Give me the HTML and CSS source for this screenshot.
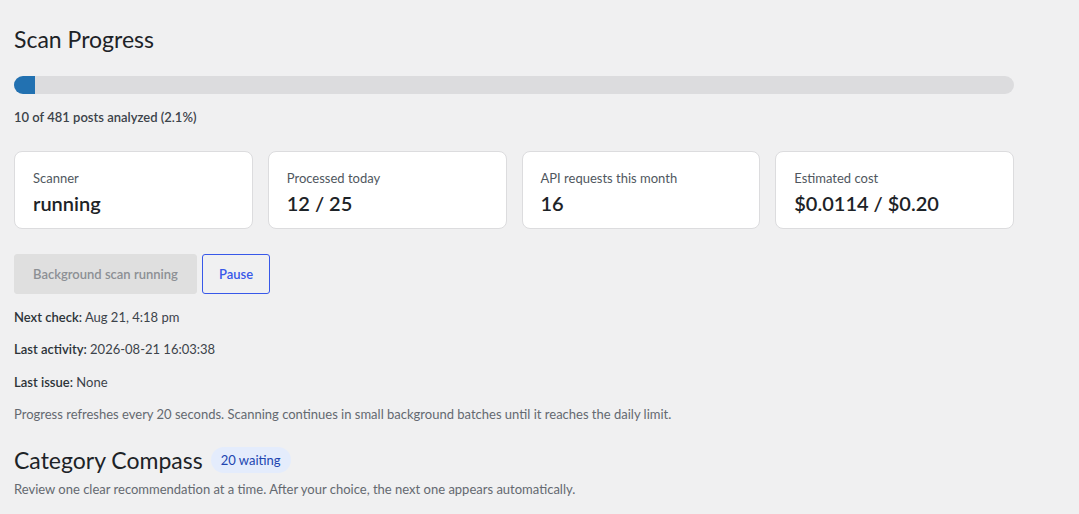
FILE: index.html
```html
<!DOCTYPE html>
<html lang="en">
<head>
  <meta charset="UTF-8">
  <title>Scan Progress</title>
  <link rel="stylesheet" href="styles.css">
</head>
<body>

  <div class="wrap">
    <h1>Scan Progress</h1>

    <div class="progress">
      <div class="progress-fill" style="width: 2.1%;"></div>
    </div>
    <p class="progress-summary">10 of 481 posts analyzed (2.1%)</p>

    <div class="stats">
      <div class="stat-card">
        <span class="stat-label">Scanner</span>
        <span class="stat-value">running</span>
      </div>
      <div class="stat-card">
        <span class="stat-label">Processed today</span>
        <span class="stat-value">12 / 25</span>
      </div>
      <div class="stat-card">
        <span class="stat-label">API requests this month</span>
        <span class="stat-value">16</span>
      </div>
      <div class="stat-card">
        <span class="stat-label">Estimated cost</span>
        <span class="stat-value">$0.0114 / $0.20</span>
      </div>
    </div>

    <div class="actions">
      <button class="btn btn-busy" disabled>Background scan running</button>
      <button class="btn btn-outline" id="pauseBtn">Pause</button>
    </div>

    <p><strong>Next check:</strong> Aug 21, 4:18 pm</p>
    <p><strong>Last activity:</strong> 2026-08-21 16:03:38</p>
    <p><strong>Last issue:</strong> None</p>
    <p class="description">Progress refreshes every 20 seconds. Scanning continues in small background batches until it reaches the daily limit.</p>

    <h2>Category Compass <span class="badge">20 waiting</span></h2>
    <p class="description intro">Review one clear recommendation at a time. After your choice, the next one appears automatically.</p>
  </div>

</body>
</html>
```

FILE: styles.css
```css
body {
  margin: 0;
  background: #f0f0f1;
  color: #3c434a;
  font-family: Lato, "Open Sans", sans-serif;
  font-size: 13px;
  line-height: 1.5;
}
.wrap {
  max-width: 1000px;
  padding: 24px 14px 0;
}
h1 {
  margin: 0;
  font-size: 23px;
  font-weight: 400;
  line-height: 30px;
  color: #1d2327;
}
.progress {
  margin-top: 22px;
  height: 18px;
  background: #dcdcde;
  border-radius: 9px;
  overflow: hidden;
}
.progress-fill {
  height: 100%;
  background: #2271b1;
}
p {
  margin: 13px 0;
}
.progress-summary {
  margin: 14px 0 23px;
  font-weight: 600;
}
.stats {
  display: grid;
  grid-template-columns: repeat(4, 1fr);
  gap: 15px;
}
.stat-card {
  display: flex;
  flex-direction: column;
  background: #fff;
  border: 1px solid #dcdcde;
  border-radius: 8px;
  padding: 16px 18px 11px;
}
.stat-label {
  line-height: 20px;
  color: #50575e;
}
.stat-value {
  margin-top: 1px;
  font-size: 20px;
  font-weight: 600;
  line-height: 28px;
  color: #1d2327;
}
.actions {
  display: flex;
  gap: 5px;
  margin: 25px 0 14px;
}
.btn {
  height: 40px;
  padding: 0 16px;
  font-family: inherit;
  font-size: 13px;
  font-weight: 600;
  border-radius: 3px;
}
.btn-busy {
  padding: 0 18px;
  background: #dfdfdf;
  color: #8c8f94;
  border: 1px solid #dfdfdf;
}
.btn-outline {
  background: transparent;
  color: #3858e9;
  border: 1px solid #3858e9;
  cursor: pointer;
}
strong {
  font-weight: 600;
  color: #2c3338;
}
.description {
  color: #646970;
}
h2 {
  display: flex;
  align-items: center;
  gap: 8px;
  margin: 20px 0 0;
  font-size: 23px;
  font-weight: 400;
  line-height: 30px;
  color: #1d2327;
}
.badge {
  padding: 3px 10px;
  font-size: 13px;
  line-height: 20px;
  color: #2145b0;
  background: #e4ecfc;
  border-radius: 13px;
}
.description.intro {
  margin-top: 5px;
}
```
